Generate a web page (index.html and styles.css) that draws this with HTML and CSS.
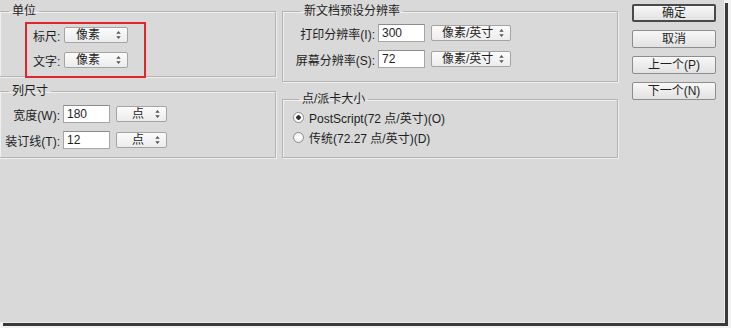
FILE: index.html
```html
<html>
<head>
<meta charset="utf-8">
<link rel="stylesheet" href="styles.css">
</head>
<body>
<div class="window">
    <div class="col-left">
        <fieldset class="group units">
            <legend>单位</legend>
            <div class="mark">
                <div class="row">
                    <span class="label">标尺:</span>
                    <span class="select w-unit">像素<svg class="arrows" viewBox="0 0 5 9"><path d="M2.5 0 L5 3 L0 3 Z M0 6 L5 6 L2.5 9 Z"/></svg></span>
                </div>
                <div class="row">
                    <span class="label">文字:</span>
                    <span class="select w-unit">像素<svg class="arrows" viewBox="0 0 5 9"><path d="M2.5 0 L5 3 L0 3 Z M0 6 L5 6 L2.5 9 Z"/></svg></span>
                </div>
            </div>
        </fieldset>

        <fieldset class="group columns">
            <legend>列尺寸</legend>
            <div class="row">
                <span class="label right w-col">宽度(W):</span>
                <span class="field">180</span>
                <span class="select w-pt">点<svg class="arrows" viewBox="0 0 5 9"><path d="M2.5 0 L5 3 L0 3 Z M0 6 L5 6 L2.5 9 Z"/></svg></span>
            </div>
            <div class="row">
                <span class="label right w-col">装订线(T):</span>
                <span class="field">12</span>
                <span class="select w-pt">点<svg class="arrows" viewBox="0 0 5 9"><path d="M2.5 0 L5 3 L0 3 Z M0 6 L5 6 L2.5 9 Z"/></svg></span>
            </div>
        </fieldset>
    </div>

    <div class="col-mid">
        <fieldset class="group resolution">
            <legend>新文档预设分辨率</legend>
            <div class="row">
                <span class="label right w-res">打印分辨率(I):</span>
                <span class="field">300</span>
                <span class="select w-ppi">像素/英寸<svg class="arrows" viewBox="0 0 5 9"><path d="M2.5 0 L5 3 L0 3 Z M0 6 L5 6 L2.5 9 Z"/></svg></span>
            </div>
            <div class="row">
                <span class="label right w-res">屏幕分辨率(S):</span>
                <span class="field">72</span>
                <span class="select w-ppi">像素/英寸<svg class="arrows" viewBox="0 0 5 9"><path d="M2.5 0 L5 3 L0 3 Z M0 6 L5 6 L2.5 9 Z"/></svg></span>
            </div>
        </fieldset>

        <fieldset class="group pica">
            <legend>点/派卡大小</legend>
            <label class="radio-row"><span class="radio checked"></span>PostScript(72 点/英寸)(O)</label>
            <label class="radio-row"><span class="radio"></span>传统(72.27 点/英寸)(D)</label>
        </fieldset>
    </div>

    <div class="col-buttons">
        <span class="button default">确定</span>
        <span class="button">取消</span>
        <span class="button">上一个(P)</span>
        <span class="button">下一个(N)</span>
    </div>
</div>
</body>
</html>
```

FILE: styles.css
```css
body {
    margin: 0;
    background-color: #f2f2f2;
    font-family: "Liberation Sans", "Noto Sans CJK SC", sans-serif;
    font-size: 12px;
    color: #1e1e1e;
}
.window {
    display: flex;
    align-items: flex-start;
    width: 725px;
    height: 323px;
    background-color: #d9d9d9;
    box-shadow: inset -1px -1px 0 #ececec, 3px 3px 0 #3a3a3a;
    overflow: hidden;
}

/* columns */
.col-left {
    width: 277px;
    margin-left: -1px;
}
.col-mid {
    width: 336px;
    margin-left: 6px;
}
.col-buttons {
    display: flex;
    flex-direction: column;
    gap: 8px;
    margin-left: 14px;
    padding-top: 4px;
}

/* group boxes */
.group {
    box-sizing: border-box;
    margin: 0;
    padding: 0;
    border: 1px solid #b4b4b4;
    box-shadow: inset 1px 1px 0 #efefef, 1px 1px 0 #efefef;
    min-width: 0;
}
.group legend {
    padding: 0 3px;
    line-height: 16px;
    height: 16px;
}
.units {
    margin-top: 3px;
    height: 74px;
    padding: 3px 0 0 25px;
}
.units legend {
    margin-left: -16px;
}
.columns {
    margin-top: 6px;
    height: 75px;
    padding-top: 6px;
}
.columns legend {
    margin-left: 9px;
}
.resolution {
    margin-top: 3px;
    height: 79px;
    padding-top: 5px;
}
.resolution legend {
    margin-left: 18px;
}
.pica {
    margin-top: 9px;
    height: 67px;
    padding-top: 1px;
}
.pica legend {
    margin-left: 16px;
}

/* red annotation box */
.mark {
    box-sizing: border-box;
    width: 121px;
    height: 56px;
    border: 2px solid #e0262b;
    padding: 2px 0 0 6px;
}

/* rows */
.row {
    display: flex;
    align-items: center;
    height: 18px;
}
.mark .row + .row {
    margin-top: 7px;
}
.columns .row + .row,
.resolution .row + .row {
    margin-top: 8px;
}
.label {
    white-space: nowrap;
}
.units .label {
    width: 31px;
}
.right {
    text-align: right;
    padding-right: 3px;
}
.w-col {
    width: 60px;
}
.w-res {
    width: 92px;
}

/* controls */
.field {
    box-sizing: border-box;
    width: 47px;
    height: 18px;
    line-height: 16px;
    padding-left: 3px;
    background-color: #fff;
    border: 1px solid #a6a6a6;
    border-top-color: #8c8c8c;
}
.select {
    box-sizing: border-box;
    position: relative;
    height: 16px;
    line-height: 14px;
    padding-left: 11px;
    border: 1px solid #a4a4a4;
    border-radius: 2px;
    background: linear-gradient(#fbfbfb, #ececec);
}
.field + .select {
    margin-left: 6px;
}
.arrows {
    position: absolute;
    right: 6px;
    top: 3px;
    width: 5px;
    height: 8px;
    fill: #555;
}
.w-unit {
    width: 64px;
}
.w-pt {
    width: 51px;
    padding-left: 15px;
}
.w-ppi {
    width: 80px;
    padding-left: 10px;
}

/* radios */
.radio-row {
    display: flex;
    align-items: center;
    height: 18px;
    padding-left: 10px;
}
.radio-row + .radio-row {
    margin-top: 2px;
}
.radio {
    box-sizing: border-box;
    width: 11px;
    height: 11px;
    margin-right: 5px;
    border: 1px solid #8e8e8e;
    border-radius: 50%;
    background: radial-gradient(#ffffff, #e8e8e8);
}
.radio.checked {
    background: radial-gradient(#333 0, #333 2px, #fff 2.5px);
}

/* buttons */
.button {
    box-sizing: border-box;
    width: 84px;
    height: 18px;
    line-height: 16px;
    text-align: center;
    border: 1px solid #8d8d8d;
    border-radius: 2px;
    background: linear-gradient(#f7f7f7, #e2e2e2);
}
.button.default {
    border: 2px solid #4a4a4a;
    line-height: 14px;
}
```
